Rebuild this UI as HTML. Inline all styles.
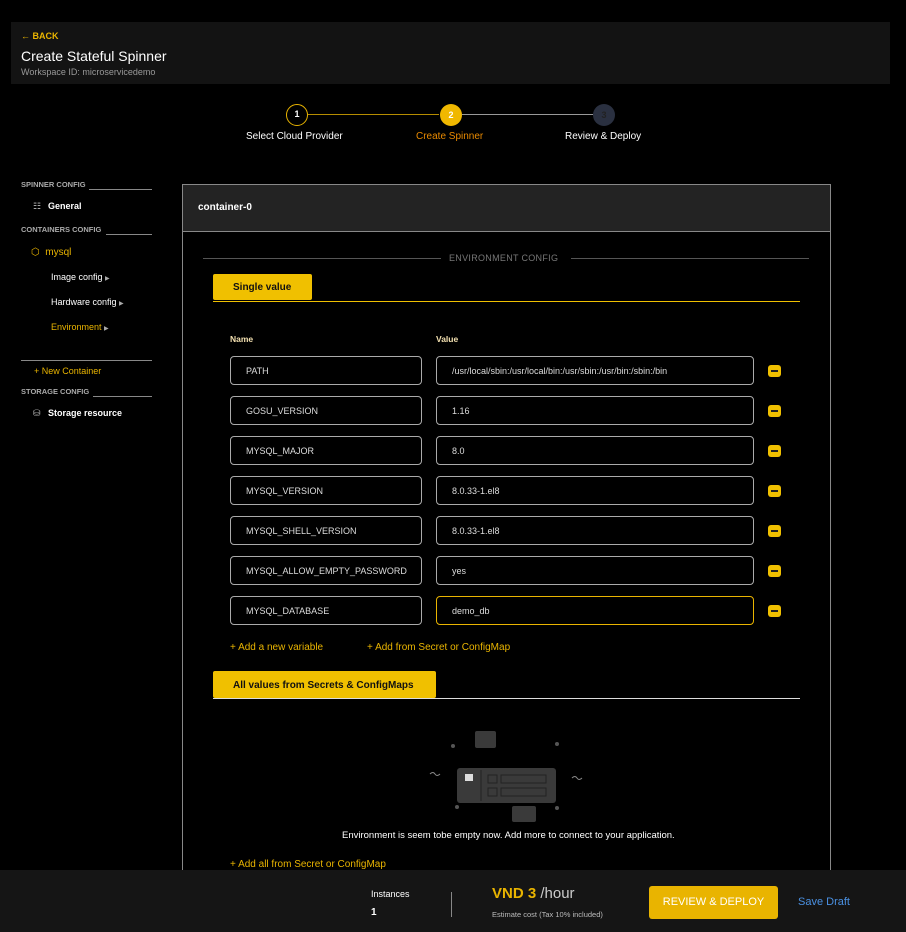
<!DOCTYPE html>
<html><head><meta charset="utf-8"><style>
*{box-sizing:border-box;margin:0;padding:0}
body{width:906px;height:932px;background:#000;font-family:"Liberation Sans",sans-serif;color:#fff;position:relative;overflow:hidden;font-size:10px}
.a{position:absolute}
.y{color:#e9b400}
.hdr{left:11px;top:22px;width:879px;height:62px;background:#131313}
.sec{font-size:7.5px;color:#aaa;font-weight:bold}
.ln{height:1px;background:#888}
.inp{position:absolute;height:29px;border:1px solid #aaa;border-radius:4px;font-size:9px;padding:9px 0 0 15px;color:#ddd}
.min{position:absolute;width:13px;height:12px;background:#f0c000;border-radius:3px}
.min:after{content:"";position:absolute;left:3px;top:5px;width:7px;height:2px;background:#222}
.tab{background:#f0c000;color:#111;font-weight:bold;font-size:10px;border-radius:2px}
</style></head><body>
<div class="a hdr"></div>
<div class="a y" style="left:21px;top:31px;font-size:9px;font-weight:bold">← BACK</div>
<div class="a" style="left:21px;top:48px;font-size:14px">Create Stateful Spinner</div>
<div class="a" style="left:21px;top:67px;font-size:9px;color:#999">Workspace ID: microservicedemo</div>

<div class="a" style="left:308px;top:114px;width:131px;height:1px;background:#b58c00"></div>
<div class="a" style="left:462px;top:114px;width:131px;height:1px;background:#999"></div>
<div class="a" style="left:286px;top:104px;width:22px;height:22px;border:1.5px solid #e9b400;border-radius:50%;font-size:9px;font-weight:bold;text-align:center;line-height:19px">1</div>
<div class="a" style="left:440px;top:104px;width:22px;height:22px;background:#f0b800;border-radius:50%;font-size:9px;font-weight:bold;text-align:center;line-height:22px">2</div>
<div class="a" style="left:593px;top:104px;width:22px;height:22px;background:#2a3040;border-radius:50%;font-size:9px;font-weight:bold;text-align:center;line-height:22px;color:#222">3</div>
<div class="a" style="left:246px;top:131px;font-size:10px">Select Cloud Provider</div>
<div class="a" style="left:416px;top:131px;font-size:10px;color:#e98a00">Create Spinner</div>
<div class="a" style="left:565px;top:131px;font-size:10px">Review &amp; Deploy</div>

<div class="a sec" style="left:21px;top:180px">SPINNER CONFIG</div><div class="a ln" style="left:89px;top:189px;width:63px"></div>
<div class="a" style="left:33px;top:201px;font-size:9px;color:#bbb">☷</div>
<div class="a" style="left:48px;top:201px;font-size:9px;font-weight:bold">General</div>
<div class="a sec" style="left:21px;top:225px">CONTAINERS CONFIG</div><div class="a ln" style="left:106px;top:234px;width:46px"></div>
<div class="a y" style="left:31px;top:247px;font-size:10px">⬡ &nbsp;mysql</div>
<div class="a" style="left:51px;top:272px;font-size:9px">Image config <span style="font-size:6px;color:#aaa">▶</span></div>
<div class="a" style="left:51px;top:297px;font-size:9px">Hardware config <span style="font-size:6px;color:#aaa">▶</span></div>
<div class="a y" style="left:51px;top:322px;font-size:9px">Environment <span style="font-size:6px;color:#aaa">▶</span></div>
<div class="a ln" style="left:21px;top:360px;width:131px"></div>
<div class="a y" style="left:34px;top:366px;font-size:9px">+ New Container</div>
<div class="a sec" style="left:21px;top:387px">STORAGE CONFIG</div><div class="a ln" style="left:93px;top:396px;width:59px"></div>
<div class="a" style="left:33px;top:408px;font-size:9px;color:#bbb">⛁</div>
<div class="a" style="left:48px;top:408px;font-size:9px;font-weight:bold">Storage resource</div>

<div class="a" style="left:182px;top:184px;width:649px;height:700px;border:1px solid #888;border-bottom:none"></div>
<div class="a" style="left:183px;top:185px;width:647px;height:47px;background:#232323;border-bottom:1px solid #888"></div>
<div class="a" style="left:198px;top:202px;font-size:10px;font-weight:bold">container-0</div>

<div class="a" style="left:203px;top:258px;width:238px;height:1px;background:#555"></div>
<div class="a" style="left:449px;top:253px;font-size:9px;color:#777;letter-spacing:.3px">ENVIRONMENT CONFIG</div>
<div class="a" style="left:571px;top:258px;width:238px;height:1px;background:#555"></div>
<div class="a tab" style="left:213px;top:274px;width:99px;height:26px;padding:8px 0 0 20px">Single value</div>
<div class="a" style="left:213px;top:301px;width:587px;height:1px;background:#f0c000"></div>
<div class="a" style="left:230px;top:334px;font-size:8.5px;font-weight:bold;color:#f3e0b0">Name</div>
<div class="a" style="left:436px;top:334px;font-size:8.5px;font-weight:bold;color:#f3e0b0">Value</div>

<div class="inp" style="left:230px;top:356px;width:192px">PATH</div><div class="inp" style="left:436px;top:356px;width:318px">/usr/local/sbin:/usr/local/bin:/usr/sbin:/usr/bin:/sbin:/bin</div><div class="min" style="left:768px;top:365px"></div>
<div class="inp" style="left:230px;top:396px;width:192px">GOSU_VERSION</div><div class="inp" style="left:436px;top:396px;width:318px">1.16</div><div class="min" style="left:768px;top:405px"></div>
<div class="inp" style="left:230px;top:436px;width:192px">MYSQL_MAJOR</div><div class="inp" style="left:436px;top:436px;width:318px">8.0</div><div class="min" style="left:768px;top:445px"></div>
<div class="inp" style="left:230px;top:476px;width:192px">MYSQL_VERSION</div><div class="inp" style="left:436px;top:476px;width:318px">8.0.33-1.el8</div><div class="min" style="left:768px;top:485px"></div>
<div class="inp" style="left:230px;top:516px;width:192px">MYSQL_SHELL_VERSION</div><div class="inp" style="left:436px;top:516px;width:318px">8.0.33-1.el8</div><div class="min" style="left:768px;top:525px"></div>
<div class="inp" style="left:230px;top:556px;width:192px">MYSQL_ALLOW_EMPTY_PASSWORD</div><div class="inp" style="left:436px;top:556px;width:318px">yes</div><div class="min" style="left:768px;top:565px"></div>
<div class="inp" style="left:230px;top:596px;width:192px">MYSQL_DATABASE</div><div class="inp" style="left:436px;top:596px;width:318px;border-color:#e9b400">demo_db</div><div class="min" style="left:768px;top:605px"></div>

<div class="a y" style="left:230px;top:642px;font-size:10px">+ Add a new variable</div>
<div class="a y" style="left:367px;top:642px;font-size:10px">+ Add from Secret or ConfigMap</div>
<div class="a tab" style="left:213px;top:671px;width:223px;height:27px;padding:9px 0 0 20px">All values from Secrets &amp; ConfigMaps</div>
<div class="a" style="left:213px;top:698px;width:587px;height:1px;background:#ddd"></div>

<svg class="a" style="left:425px;top:728px" width="160" height="100">
<rect x="32" y="40" width="99" height="35" rx="3" fill="#3a3a3a"/>
<line x1="56" y1="42" x2="56" y2="73" stroke="#222" stroke-width="1"/>
<rect x="40" y="46" width="8" height="7" fill="#ddd"/>
<rect x="63" y="47" width="9" height="8" fill="none" stroke="#222"/><rect x="76" y="47" width="45" height="8" fill="none" stroke="#222"/>
<rect x="63" y="60" width="9" height="8" fill="none" stroke="#222"/><rect x="76" y="60" width="45" height="8" fill="none" stroke="#222"/>
<rect x="50" y="3" width="21" height="17" rx="2" fill="#3a3a3a"/>
<rect x="87" y="78" width="24" height="16" rx="2" fill="#3a3a3a"/>
<circle cx="28" cy="18" r="2" fill="#555"/><circle cx="132" cy="16" r="2" fill="#555"/><circle cx="32" cy="79" r="2" fill="#555"/><circle cx="132" cy="80" r="2" fill="#555"/>
<path d="M5 46 q3 -3 5 0 t5 0" stroke="#888" fill="none"/><path d="M147 50 q3 -3 5 0 t5 0" stroke="#888" fill="none"/>
</svg>
<div class="a" style="left:342px;top:830px;font-size:9.5px">Environment is seem tobe empty now. Add more to connect to your application.</div>
<div class="a y" style="left:230px;top:859px;font-size:10px">+ Add all from Secret or ConfigMap</div>

<div class="a" style="left:0;top:870px;width:906px;height:62px;background:#151515"></div>
<div class="a" style="left:371px;top:889px;font-size:9px">Instances</div>
<div class="a" style="left:371px;top:907px;font-size:10px;font-weight:bold">1</div>
<div class="a" style="left:451px;top:892px;width:1px;height:25px;background:#888"></div>
<div class="a" style="left:492px;top:885px;font-size:15px"><b class="y">VND 3</b> <span style="color:#ccc">/hour</span></div>
<div class="a" style="left:492px;top:910px;font-size:7.5px;color:#bbb">Estimate cost (Tax 10% included)</div>
<div class="a" style="left:649px;top:886px;width:129px;height:33px;background:#e9b400;border-radius:3px;text-align:center;line-height:33px;font-size:11px">REVIEW &amp; DEPLOY</div>
<div class="a" style="left:798px;top:896px;font-size:11px;color:#4a90e2">Save Draft</div>
</body></html>
